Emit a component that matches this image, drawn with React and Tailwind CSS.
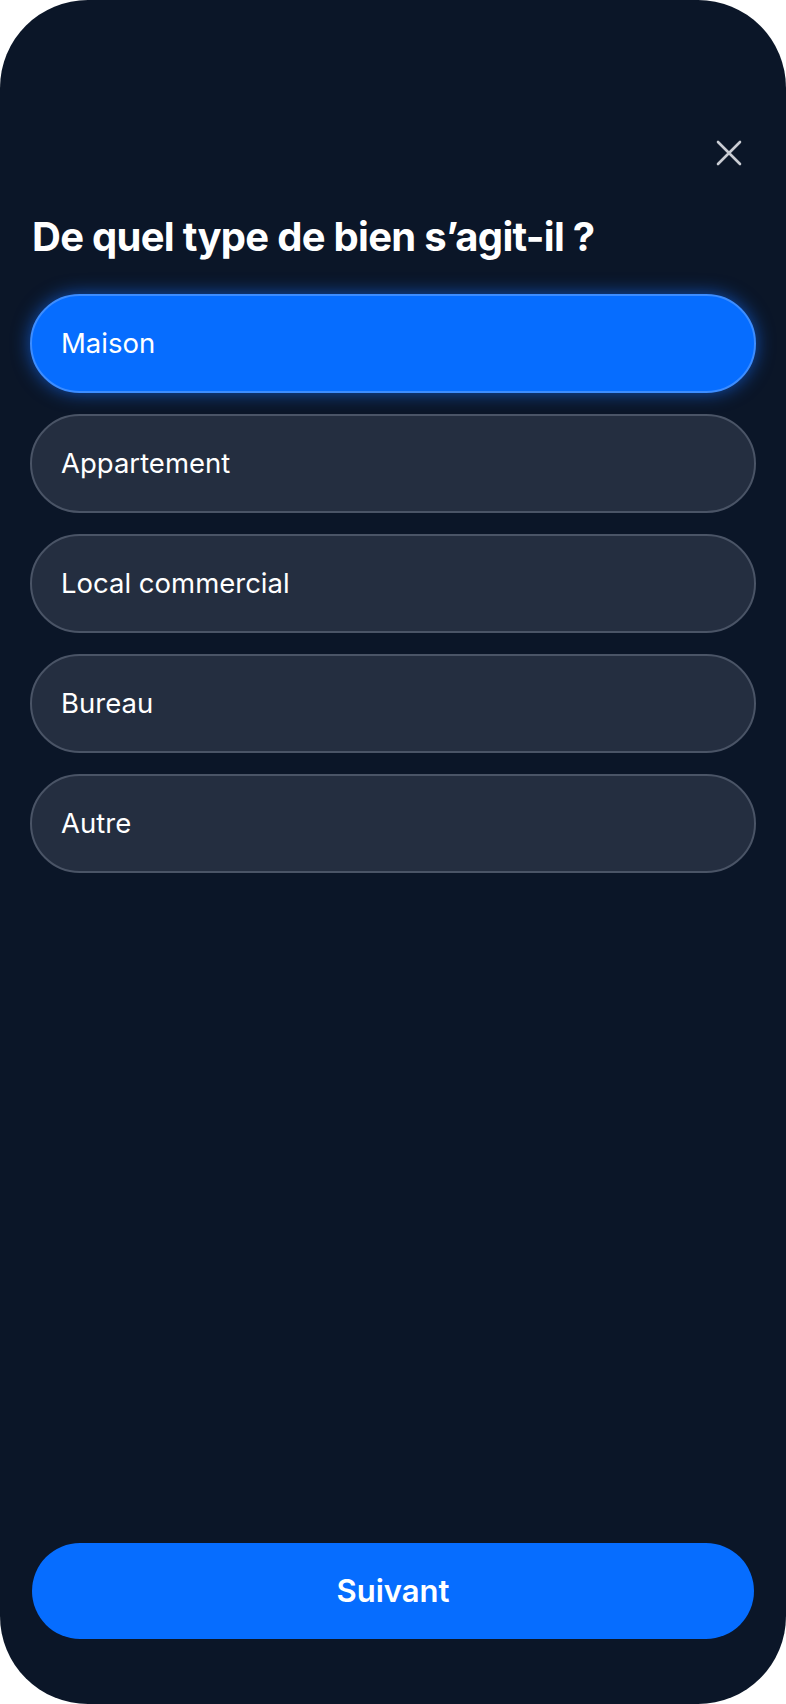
import React, { useState } from 'react';

const options = ['Maison', 'Appartement', 'Local commercial', 'Bureau', 'Autre'];

export default function App() {
  const [selected, setSelected] = useState('Maison');

  return (
    <div className="bg-white w-[786px] h-[1704px]" style={{ fontFamily: 'Inter, "Noto Sans", sans-serif' }}>
      <div className="h-full rounded-[88px] bg-[#0b1628] flex flex-col px-[30px]">
        <div className="flex justify-end pt-[140px] pr-[14px]">
          <button className="text-[#c9ccd3]">
            <svg width="26" height="26" viewBox="0 0 26 26" fill="none" stroke="currentColor" strokeWidth="2.6" strokeLinecap="round">
              <path d="M2 2L24 24M24 2L2 24" />
            </svg>
          </button>
        </div>

        <h1 className="mt-[46px] pl-[2px] text-white text-[40px] font-bold tracking-[-0.018em] leading-tight">
          De quel type de bien s’agit-il ?
        </h1>

        <div className="mt-[32px] flex flex-col gap-[21px]">
          {options.map((o) => (
            <button
              key={o}
              onClick={() => setSelected(o)}
              className={`h-[99px] rounded-full border-2 px-[29px] text-left text-[27.5px] text-white ${
                selected === o
                  ? 'bg-[#066dff] border-[#3d8dff] shadow-[0_0_18px_rgba(20,110,255,0.65)]'
                  : 'bg-[#242e40] border-[#4a5466]'
              }`}
            >
              {o}
            </button>
          ))}
        </div>

        <div className="mt-auto pb-[65px] px-[2px]">
          <button className="w-full h-[96px] rounded-full bg-[#066dff] text-white text-[31px] font-semibold">
            Suivant
          </button>
        </div>
      </div>
    </div>
  );
}
